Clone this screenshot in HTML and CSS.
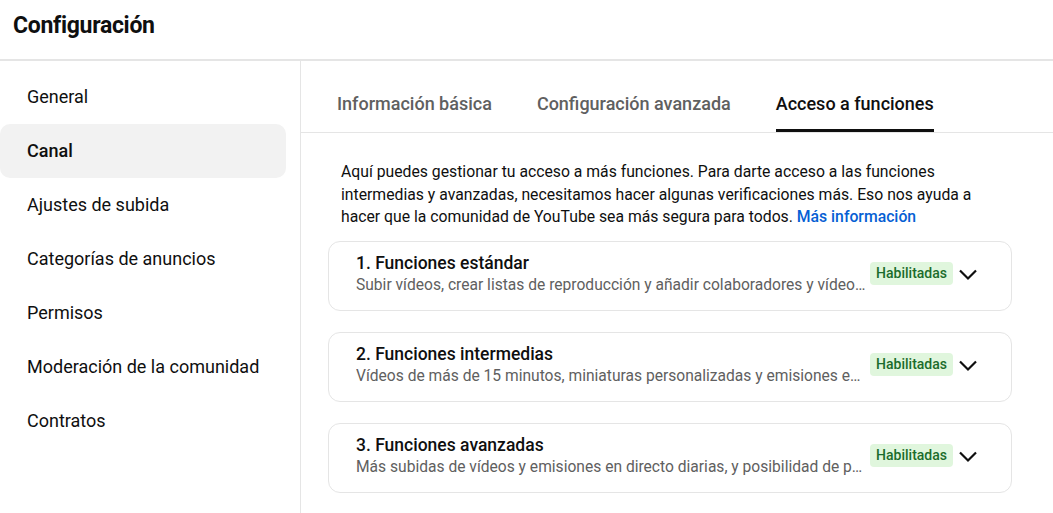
FILE: index.html
```html
<!DOCTYPE html>
<html lang="es">
<head>
    <meta charset="UTF-8">
    <meta name="viewport" content="width=device-width, initial-scale=1.0">
    <title>Configuración</title>
    <link rel="stylesheet" href="styles.css">
</head>
<body>

    <header class="page-header">
        <h1>Configuración</h1>
    </header>

    <div class="layout">
        <!-- Left menu -->
        <nav class="side-nav">
            <a class="nav-item">General</a>
            <a class="nav-item active">Canal</a>
            <a class="nav-item">Ajustes de subida</a>
            <a class="nav-item">Categorías de anuncios</a>
            <a class="nav-item">Permisos</a>
            <a class="nav-item">Moderación de la comunidad</a>
            <a class="nav-item">Contratos</a>
        </nav>

        <main class="content">
            <div class="tabs">
                <div class="tab">Información básica</div>
                <div class="tab">Configuración avanzada</div>
                <div class="tab active">Acceso a funciones</div>
            </div>

            <p class="intro">
                Aquí puedes gestionar tu acceso a más funciones. Para darte acceso a las funciones
                intermedias y avanzadas, necesitamos hacer algunas verificaciones más. Eso nos ayuda a
                hacer que la comunidad de YouTube sea más segura para todos. <a class="link">Más información</a>
            </p>

            <div class="feature-list">
                <div class="feature">
                    <div class="feature-text">
                        <div class="feature-title">1. Funciones estándar</div>
                        <div class="feature-desc">Subir vídeos, crear listas de reproducción y añadir colaboradores y vídeos a listas de reproducción</div>
                    </div>
                    <span class="badge">Habilitadas</span>
                    <svg class="chevron" viewBox="0 0 24 24"><path d="M4 8.5l8 8 8-8"/></svg>
                </div>

                <div class="feature">
                    <div class="feature-text">
                        <div class="feature-title">2. Funciones intermedias</div>
                        <div class="feature-desc">Vídeos de más de 15 minutos, miniaturas personalizadas y emisiones en directo</div>
                    </div>
                    <span class="badge">Habilitadas</span>
                    <svg class="chevron" viewBox="0 0 24 24"><path d="M4 8.5l8 8 8-8"/></svg>
                </div>

                <div class="feature">
                    <div class="feature-text">
                        <div class="feature-title">3. Funciones avanzadas</div>
                        <div class="feature-desc">Más subidas de vídeos y emisiones en directo diarias, y posibilidad de poner enlaces externos</div>
                    </div>
                    <span class="badge">Habilitadas</span>
                    <svg class="chevron" viewBox="0 0 24 24"><path d="M4 8.5l8 8 8-8"/></svg>
                </div>
            </div>
        </main>
    </div>

</body>
</html>
```

FILE: styles.css
```css
/* General */
body {
    margin: 0;
    font-family: Roboto, 'Noto Sans', Arial, sans-serif;
    background: #fff;
    color: #0f0f0f;
    height: 513px;
    overflow: hidden;
}

/* Header */
.page-header {
    height: 61px;
    border-bottom: 2px solid #e5e5e5;
    box-sizing: border-box;
    padding-left: 13px;
    display: flex;
    align-items: center;
}

.page-header h1 {
    margin: 0 0 8px;
    font-size: 23px;
    font-weight: 700;
    letter-spacing: -0.3px;
}

/* Two columns */
.layout {
    display: flex;
    height: 452px;
}

/* Side menu */
.side-nav {
    width: 300px;
    border-right: 1px solid #e5e5e5;
    padding-top: 9px;
    display: flex;
    flex-direction: column;
    flex-shrink: 0;
}

.nav-item {
    display: flex;
    align-items: center;
    height: 54px;
    width: 286px;
    padding-left: 27px;
    padding-bottom: 1px;
    box-sizing: border-box;
    font-size: 18px;
    color: #0f0f0f;
    border-radius: 10px;
}

.nav-item.active {
    background: #f2f2f2;
    font-weight: 500;
}

/* Main column */
.content {
    flex: 1;
    min-width: 0;
}

.tabs {
    display: flex;
    gap: 45px;
    padding-left: 36px;
    border-bottom: 1px solid #e5e5e5;
}

.tab {
    padding: 31px 0 13px;
    line-height: 24px;
    font-size: 18px;
    font-weight: 500;
    color: #606060;
    border-bottom: 3px solid transparent;
}

.tab.active {
    color: #0f0f0f;
    border-bottom-color: #0f0f0f;
}

.intro {
    margin: 28px 40px 0 40px;
    font-size: 15.75px;
    line-height: 22.5px;
    color: #0f0f0f;
    max-width: 645px;
}

.link {
    color: #065fd4;
    font-weight: 500;
}

/* Feature cards */
.feature-list {
    display: flex;
    flex-direction: column;
    gap: 21px;
    margin: 12px 0 0 27px;
    width: 684px;
}

.feature {
    display: flex;
    align-items: center;
    border: 1px solid #e5e5e5;
    border-radius: 12px;
    padding: 10px 31px 14px 27px;
}

.feature-text {
    flex: 1;
    min-width: 0;
}

.feature-title {
    font-size: 17.5px;
    font-weight: 500;
    line-height: 22px;
}

.feature-desc {
    font-size: 15.6px;
    line-height: 22px;
    color: #606060;
    white-space: nowrap;
    overflow: hidden;
    text-overflow: ellipsis;
}

.badge {
    flex-shrink: 0;
    background: #e0f6dd;
    color: #1b6c2c;
    font-size: 14px;
    font-weight: 500;
    line-height: 23px;
    padding: 0 6px;
    border-radius: 4px;
    margin-left: 3px;
}

.chevron {
    flex-shrink: 0;
    width: 24px;
    height: 24px;
    margin-left: 3px;
    fill: none;
    stroke: #0f0f0f;
    stroke-width: 2.2;
}
```
